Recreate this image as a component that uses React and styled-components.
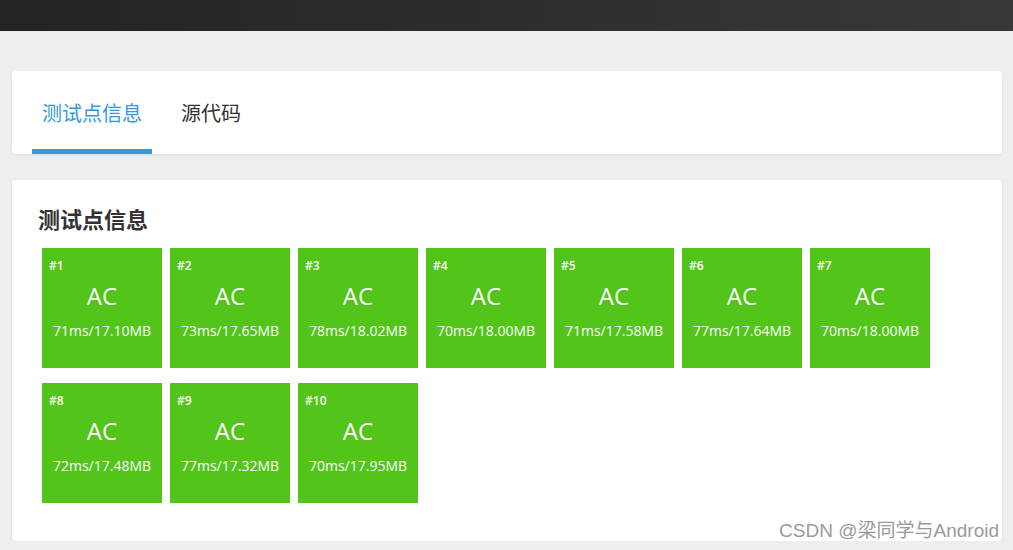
import React from 'react'
import styled, { createGlobalStyle } from 'styled-components'

const Global = createGlobalStyle`
  body {
    margin: 0;
    background: #eeeeee;
    font-family: "Open Sans", "Noto Sans CJK SC", sans-serif;
  }
`

const Header = styled.div`
  height: 31px;
  background: linear-gradient(to right, #222325, #37383a);
`

const Page = styled.div`
  padding: 40px 11px 0 12px;
  display: flex;
  flex-direction: column;
  gap: 26px;
`

const Card = styled.div`
  background: #fff;
  border-radius: 4px;
  box-shadow: 0 1px 3px rgba(0, 0, 0, 0.08);
`

const Tabs = styled.div`
  display: flex;
  padding: 0 20px;
  height: 83px;
  align-items: stretch;
`

const Tab = styled.div`
  padding: 4px 10px 0;
  margin-right: 19px;
  display: flex;
  align-items: center;
  font-size: 20px;
  color: ${p => (p.active ? '#3498db' : '#333')};
  border-bottom: 5px solid ${p => (p.active ? '#3a97d9' : 'transparent')};
`

const Body = styled.div`
  padding: 23px 26px 38px 30px;
  position: relative;
`

const Title = styled.h3`
  margin: 0 0 13px -4px;
  font-size: 22px;
  font-weight: 700;
  color: #333;
  line-height: 32px;
`

const Grid = styled.div`
  display: flex;
  flex-wrap: wrap;
  column-gap: 8px;
  row-gap: 15px;
  width: 900px;
`

const Box = styled.div`
  width: 120px;
  height: 120px;
  background: #52c41a;
  color: #fff;
  display: flex;
  flex-direction: column;
  align-items: center;
`

const Num = styled.div`
  align-self: flex-start;
  margin: 11px 0 0 7px;
  font-size: 12px;
  font-weight: 600;
  line-height: 14px;
`

const Status = styled.div`
  font-size: 24px;
  line-height: 30px;
  margin-top: 8px;
`

const Stat = styled.div`
  font-size: 14px;
  line-height: 18px;
  margin-top: 11px;
`

const Mark = styled.div`
  position: absolute;
  right: 3px;
  bottom: 0;
  font-family: "Liberation Sans", "Noto Sans CJK SC", sans-serif;
  font-size: 19px;
  color: #9a9a9a;
  text-shadow: 1px 1px 0 #fff;
  line-height: 20px;
`

const cases = [
  '71ms/17.10MB', '73ms/17.65MB', '78ms/18.02MB', '70ms/18.00MB', '71ms/17.58MB',
  '77ms/17.64MB', '70ms/18.00MB', '72ms/17.48MB', '77ms/17.32MB', '70ms/17.95MB'
]

export default function App () {
  return (
    <>
      <Global />
      <Header />
      <Page>
        <Card>
          <Tabs>
            <Tab active>测试点信息</Tab>
            <Tab>源代码</Tab>
          </Tabs>
        </Card>
        <Card>
          <Body>
            <Title>测试点信息</Title>
            <Grid>
              {cases.map((c, i) => (
                <Box key={i}>
                  <Num>#{i + 1}</Num>
                  <Status>AC</Status>
                  <Stat>{c}</Stat>
                </Box>
              ))}
            </Grid>
            <Mark>CSDN @梁同学与Android</Mark>
          </Body>
        </Card>
      </Page>
    </>
  )
}
